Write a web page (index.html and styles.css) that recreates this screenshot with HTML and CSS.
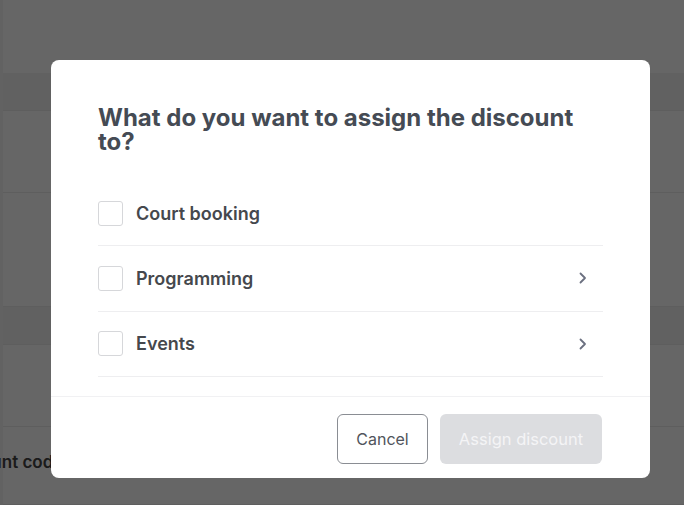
FILE: index.html
```html
<!DOCTYPE html>
<html>
<head>
<meta charset="utf-8">
<link rel="stylesheet" href="styles.css">
</head>
<body>
<div class="page">
  <div class="bg-row bg-top"></div>
  <div class="bg-row bg-head"></div>
  <div class="bg-row bg-r1"></div>
  <div class="bg-row bg-r2"></div>
  <div class="bg-row bg-head2"></div>
  <div class="bg-row bg-r3"></div>
  <div class="bg-row bg-r4"><span class="bg-text">Discount code</span></div>
</div>
<div class="overlay">
  <div class="modal">
    <div class="modal-body">
      <h2 class="title">What do you want to assign the discount to?</h2>
      <ul class="options">
        <li class="option">
          <span class="check"></span>
          <span class="label">Court booking</span>
        </li>
        <li class="option">
          <span class="check"></span>
          <span class="label">Programming</span>
          <svg class="chev" width="10" height="14" viewBox="0 0 10 14"><path d="M2.5 2.5 L7 7 L2.5 11.5" fill="none" stroke="#6b7080" stroke-width="1.8" stroke-linecap="round" stroke-linejoin="round"/></svg>
        </li>
        <li class="option">
          <span class="check"></span>
          <span class="label">Events</span>
          <svg class="chev" width="10" height="14" viewBox="0 0 10 14"><path d="M2.5 2.5 L7 7 L2.5 11.5" fill="none" stroke="#6b7080" stroke-width="1.8" stroke-linecap="round" stroke-linejoin="round"/></svg>
        </li>
      </ul>
    </div>
    <div class="modal-footer">
      <button class="btn btn-cancel">Cancel</button>
      <button class="btn btn-primary" disabled>Assign discount</button>
    </div>
  </div>
</div>
</body>
</html>
```

FILE: styles.css
```css
* { box-sizing: border-box; }
html, body { margin: 0; padding: 0; }
body {
  width: 684px;
  height: 505px;
  overflow: hidden;
  font-family: Inter, "Liberation Sans", sans-serif;
  background: #ffffff;
}
.page {
  display: flex;
  flex-direction: column;
  height: 505px;
  border-left: 3px solid #f4f4f4;
}
.bg-row { border-bottom: 1px solid #ececec; }
.bg-top { height: 73px; border-bottom: none; }
.bg-head { height: 38px; background: #f3f3f3; }
.bg-r1 { height: 82px; }
.bg-r2 { height: 114px; }
.bg-head2 { height: 38px; background: #f3f3f3; }
.bg-r3 { height: 82px; }
.bg-r4 { flex: 1; display: flex; align-items: flex-start; padding-top: 25px; }
.bg-text {
  margin-left: -58px;
  font-size: 17px;
  font-weight: 600;
  color: #444;
  white-space: nowrap;
}
.overlay {
  position: fixed;
  inset: 0;
  background: rgba(0, 0, 0, 0.6);
}
.modal {
  position: absolute;
  left: 51px;
  top: 60px;
  width: 599px;
  height: 418px;
  background: #fff;
  border-radius: 8px;
  display: flex;
  flex-direction: column;
}
.modal-body {
  flex: 1;
  padding: 46px 47px 0 47px;
  border-bottom: 1px solid #f1f1f3;
}
.title {
  margin: 0;
  font-size: 24px;
  line-height: 24px;
  font-weight: 650;
  color: #454b54;
}
.options {
  list-style: none;
  margin: 27px 0 0 0;
  padding: 0;
}
.option {
  display: flex;
  align-items: center;
  height: 65.5px;
  border-bottom: 1px solid #eeeef0;
}
.option:first-child { height: 65px; }
.check {
  width: 25px;
  height: 25px;
  border: 1px solid #d6d7da;
  border-radius: 3px;
  flex: none;
}
.label {
  margin-left: 13px;
  font-size: 18px;
  font-weight: 600;
  color: #45484d;
  flex: 1;
}
.chev { margin-right: 15px; }
.modal-footer {
  display: flex;
  justify-content: flex-end;
  gap: 12px;
  padding: 17px 48px 14px 0;
}
.btn {
  height: 50px;
  border-radius: 6px;
  font-family: Inter, "Liberation Sans", sans-serif;
  font-size: 16px;
  font-weight: 400;
  padding: 0 8px;
}
.btn-cancel {
  width: 91px;
  background: #fff;
  border: 1px solid #8a8d93;
  color: #50545b;
}
.btn-primary {
  width: 162px;
  background: #dcdde0;
  border: none;
  font-size: 16.5px;
  color: #f4f4f6;
}
```
